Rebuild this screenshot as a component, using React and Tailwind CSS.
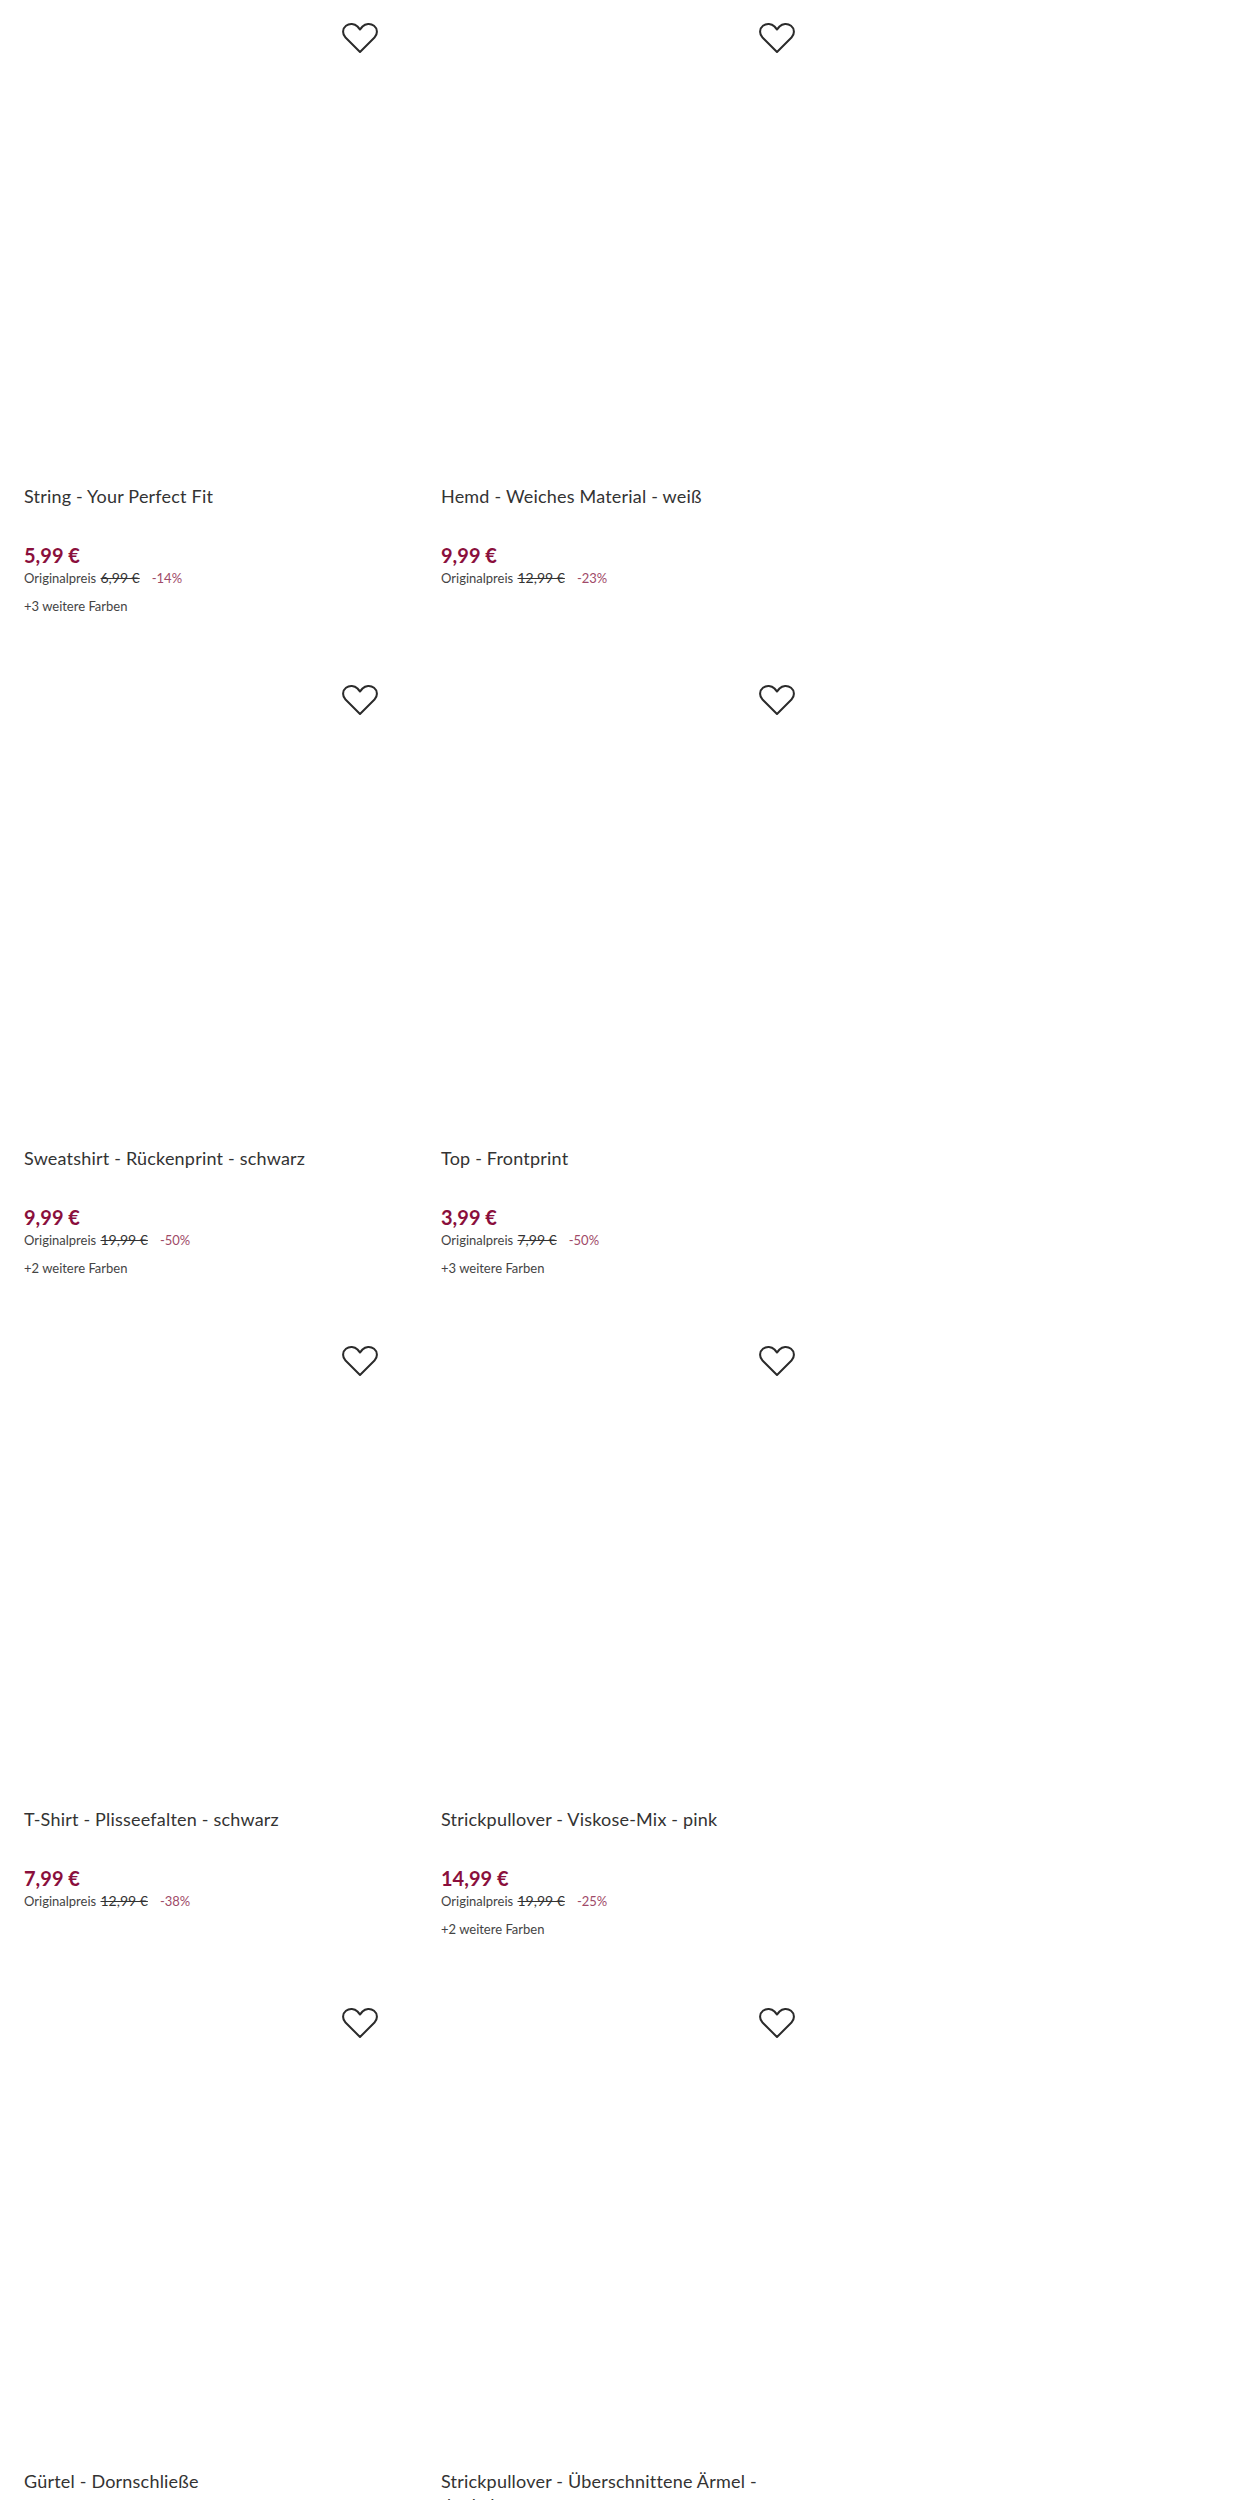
const products = [
  { title: 'String - Your Perfect Fit', price: '5,99 €', original: '6,99 €', off: '-14%', colors: '+3 weitere Farben' },
  { title: 'Hemd - Weiches Material - weiß', price: '9,99 €', original: '12,99 €', off: '-23%' },
  { title: 'Sweatshirt - Rückenprint - schwarz', price: '9,99 €', original: '19,99 €', off: '-50%', colors: '+2 weitere Farben' },
  { title: 'Top - Frontprint', price: '3,99 €', original: '7,99 €', off: '-50%', colors: '+3 weitere Farben' },
  { title: 'T-Shirt - Plisseefalten - schwarz', price: '7,99 €', original: '12,99 €', off: '-38%' },
  { title: 'Strickpullover - Viskose-Mix - pink', price: '14,99 €', original: '19,99 €', off: '-25%', colors: '+2 weitere Farben' },
  { title: 'Gürtel - Dornschließe', price: '5,99 €', original: '7,99 €', off: '-25%' },
  { title: 'Strickpullover - Überschnittene Ärmel - dunkelrot', price: '14,99 €', original: '19,99 €', off: '-25%' },
]

function Heart() {
  return (
    <svg viewBox="0 0 36 32" className="w-[36px] h-[32px]" fill="none" stroke="#2b2b2b" strokeWidth="2" strokeLinejoin="round">
      <path d="M18 30 L3.5 15.5 C0 12 0.5 6.5 4 3.8 C7.5 1 12.5 1.5 15.5 4.5 L18 7.5 L20.5 4.5 C23.5 1.5 28.5 1 32 3.8 C35.5 6.5 36 12 32.5 15.5 Z" />
    </svg>
  )
}

function ProductCard({ product }) {
  return (
    <div className="h-[661.5px] px-6">
      <div className="h-[487px] flex justify-end pt-[22px] pr-[15px]">
        <Heart />
      </div>
      <h3 className="text-[18px] leading-[24px] h-[48px] max-w-[340px] mt-[-3px] tracking-[0.2px] text-[#333] font-normal">
        {product.title}
      </h3>
      <p className="text-[20px] leading-[20px] mt-[13px] font-bold text-[#8a0f3c]">{product.price}</p>
      <p className="text-[13px] leading-[16px] mt-[5px] text-[#444]">
        Originalpreis <span className="line-through text-[14px] ml-px text-[#333]">{product.original}</span>
        <span className="ml-[12px] text-[#a04a68]">{product.off}</span>
      </p>
      {product.colors && <p className="text-[13px] leading-[16px] mt-[12px] text-[#444]">{product.colors}</p>}
    </div>
  )
}

export default function App() {
  return (
    <div className="h-[2500px] overflow-hidden bg-white font-['Lato','Liberation_Sans',sans-serif]">
      <div className="grid grid-cols-2 w-[834px]">
        {products.map((product) => (
          <ProductCard key={product.title} product={product} />
        ))}
      </div>
    </div>
  )
}
